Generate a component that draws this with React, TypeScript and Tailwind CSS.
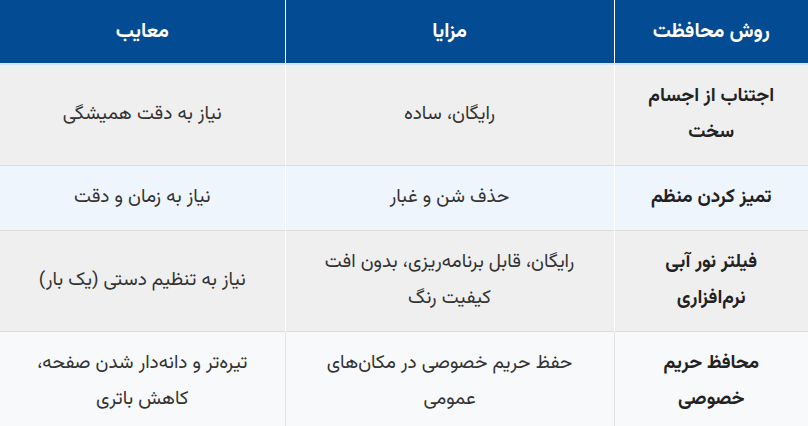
const rows = [
  {
    method: "اجتناب از اجسام سخت",
    pros: "رایگان، ساده",
    cons: "نیاز به دقت همیشگی",
    bg: "bg-[#efefef]",
    line: "border-white",
  },
  {
    method: "تمیز کردن منظم",
    pros: "حذف شن و غبار",
    cons: "نیاز به زمان و دقت",
    bg: "bg-[#eef5fc]",
    line: "border-white",
  },
  {
    method: "فیلتر نور آبی نرم‌افزاری",
    pros: "رایگان، قابل برنامه‌ریزی، بدون افت کیفیت رنگ",
    cons: "نیاز به تنظیم دستی (یک بار)",
    bg: "bg-[#efefef]",
    line: "border-white",
  },
  {
    method: "محافظ حریم خصوصی",
    pros: "حفظ حریم خصوصی در مکان‌های عمومی",
    cons: "تیره‌تر و دانه‌دار شدن صفحه، کاهش باتری",
    bg: "bg-[#f8f9fa]",
    line: "border-[#e2e2e2]",
  },
];

export default function App() {
  return (
    <div
      dir="rtl"
      className="w-[808px] h-[426px] overflow-hidden bg-white text-[#333] font-['Vazirmatn','Noto_Sans_Arabic','DejaVu_Sans',sans-serif]"
    >
      <table className="w-full border-collapse table-fixed text-center text-[19px] leading-[36px]">
        <colgroup>
          <col className="w-[194px]" />
          <col className="w-[329px]" />
          <col className="w-[285px]" />
        </colgroup>
        <thead>
          <tr className="bg-[#034b92] text-white text-[20px] font-bold border-b-2 border-[#d6e4f2]">
            <th className="h-[64px] px-3 border-l border-white">روش محافظت</th>
            <th className="px-4 border-l border-white">مزایا</th>
            <th className="px-4">معایب</th>
          </tr>
        </thead>
        <tbody>
          {rows.map((r) => (
            <tr key={r.method} className={`${r.bg} border-b border-[#dcdcdc]`}>
              <td className={`px-4 py-[14px] font-bold text-[#222] border-l ${r.line}`}>
                {r.method}
              </td>
              <td className={`px-9 py-[14px] border-l ${r.line}`}>{r.pros}</td>
              <td className="px-6 py-[14px]">{r.cons}</td>
            </tr>
          ))}
        </tbody>
      </table>
    </div>
  );
}
